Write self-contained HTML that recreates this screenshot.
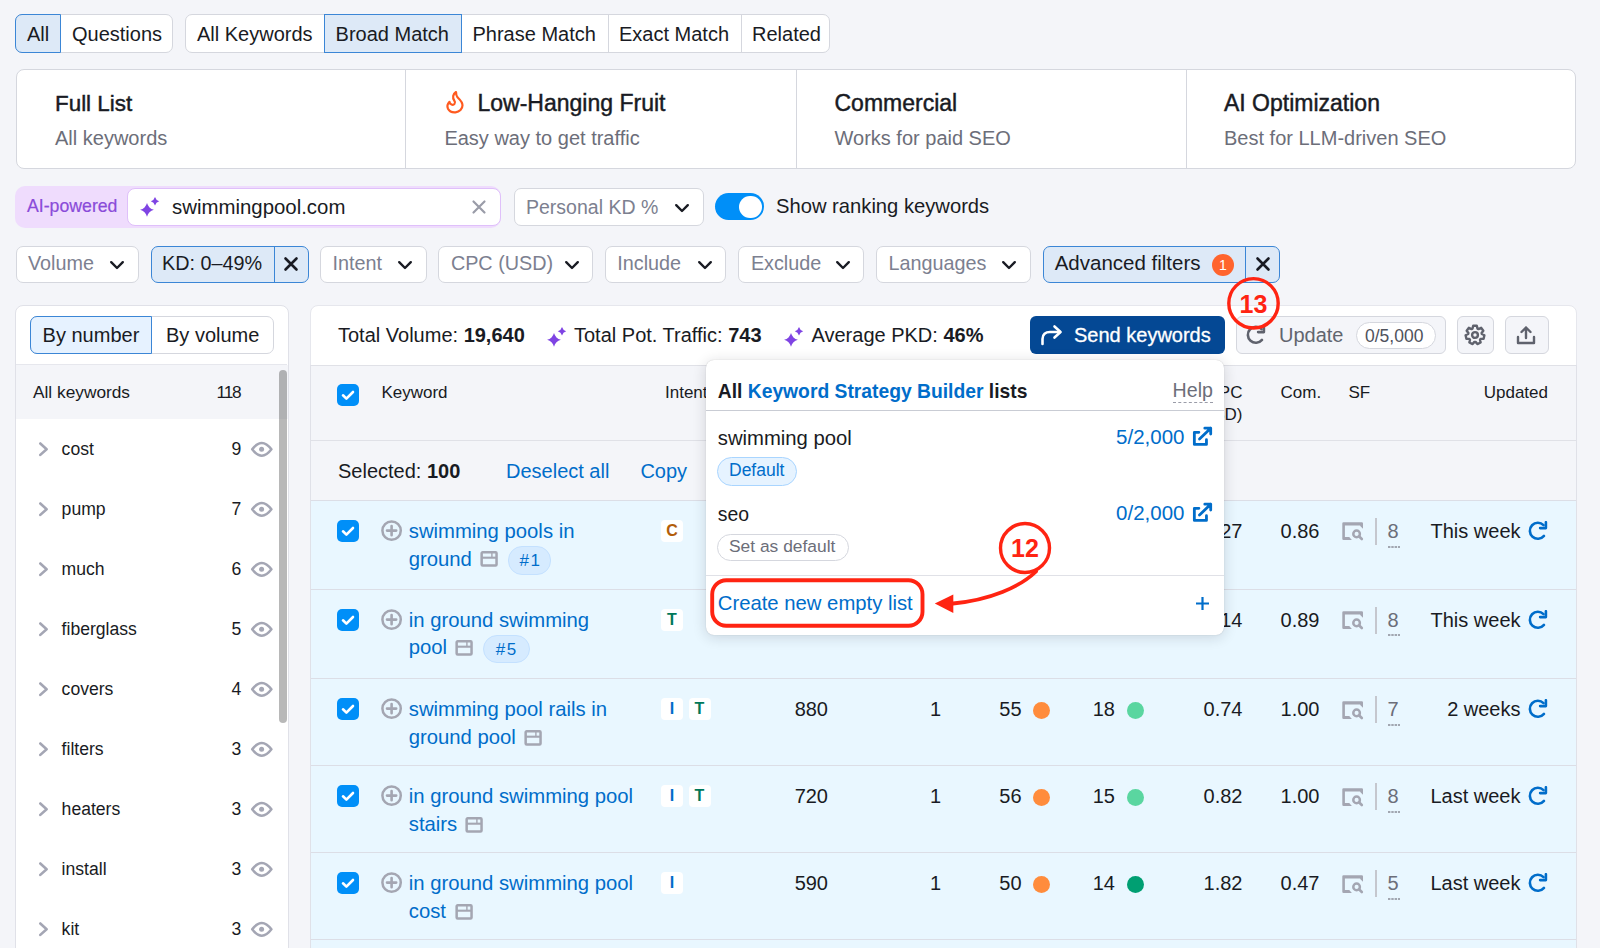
<!DOCTYPE html>
<html><head><meta charset="utf-8">
<style>
*{box-sizing:border-box;margin:0;padding:0}
html,body{width:1600px;height:948px;overflow:hidden;background:#f4f5f9;font-family:"Liberation Sans",sans-serif;color:#191b23}
.abs{position:absolute}
</style></head><body>
<div class="abs" style="left:15.00px;top:14.00px;width:158.00px;height:38.50px;background:#fff;border:1px solid #d5d7de;border-radius:7px;"></div>
<div class="abs" style="left:15.00px;top:14.00px;width:46.00px;height:38.50px;background:#dde9f7;border:1px solid #3b86d6;border-radius:7px 0 0 7px;"></div>
<div class="abs" style="left:27.00px;top:14px;font-size:20.00px;line-height:40px;color:#191b23;font-weight:normal;white-space:nowrap;">All</div>
<div class="abs" style="left:72.00px;top:14px;font-size:20.00px;line-height:40px;color:#191b23;font-weight:normal;white-space:nowrap;">Questions</div>
<div class="abs" style="left:185.00px;top:14.00px;width:645.00px;height:38.50px;background:#fff;border:1px solid #d5d7de;border-radius:7px;"></div>
<div class="abs" style="left:607.50px;top:15.00px;width:1px;height:36.50px;background:#d5d7de"></div>
<div class="abs" style="left:740.50px;top:15.00px;width:1px;height:36.50px;background:#d5d7de"></div>
<div class="abs" style="left:323.60px;top:14.00px;width:138.00px;height:38.50px;background:#dde9f7;border:1px solid #3b86d6;border-radius:0px;"></div>
<div class="abs" style="left:197.00px;top:14px;font-size:20.00px;line-height:40px;color:#191b23;font-weight:normal;white-space:nowrap;">All Keywords</div>
<div class="abs" style="left:335.60px;top:14px;font-size:20.00px;line-height:40px;color:#191b23;font-weight:normal;white-space:nowrap;">Broad Match</div>
<div class="abs" style="left:472.50px;top:14px;font-size:20.00px;line-height:40px;color:#191b23;font-weight:normal;white-space:nowrap;">Phrase Match</div>
<div class="abs" style="left:619.00px;top:14px;font-size:20.00px;line-height:40px;color:#191b23;font-weight:normal;white-space:nowrap;">Exact Match</div>
<div class="abs" style="left:752.00px;top:14px;font-size:20.00px;line-height:40px;color:#191b23;font-weight:normal;white-space:nowrap;">Related</div>
<div class="abs" style="left:15.50px;top:69.00px;width:1560.10px;height:100.00px;background:#fff;border:1px solid #d5d7de;border-radius:8px;"></div>
<div class="abs" style="left:405.40px;top:70.00px;width:1px;height:98.00px;background:#d5d7de"></div>
<div class="abs" style="left:795.50px;top:70.00px;width:1px;height:98.00px;background:#d5d7de"></div>
<div class="abs" style="left:1185.50px;top:70.00px;width:1px;height:98.00px;background:#d5d7de"></div>
<div class="abs" style="left:55.00px;top:84px;font-size:22.40px;line-height:40px;color:#191b23;font-weight:normal;white-space:nowrap;-webkit-text-stroke:0.45px #191b23">Full List</div>
<div class="abs" style="left:55.00px;top:118px;font-size:20.00px;line-height:40px;color:#6c6e79;font-weight:normal;white-space:nowrap;">All keywords</div>
<div class="abs" style="left:477.50px;top:83px;font-size:23.00px;line-height:40px;color:#191b23;font-weight:normal;white-space:nowrap;-webkit-text-stroke:0.45px #191b23">Low-Hanging Fruit</div>
<div class="abs" style="left:444.40px;top:118px;font-size:20.00px;line-height:40px;color:#6c6e79;font-weight:normal;white-space:nowrap;">Easy way to get traffic</div>
<div class="abs" style="left:834.50px;top:83px;font-size:23.00px;line-height:40px;color:#191b23;font-weight:normal;white-space:nowrap;-webkit-text-stroke:0.45px #191b23">Commercial</div>
<div class="abs" style="left:834.50px;top:118px;font-size:20.00px;line-height:40px;color:#6c6e79;font-weight:normal;white-space:nowrap;">Works for paid SEO</div>
<div class="abs" style="left:1224.00px;top:83px;font-size:23.00px;line-height:40px;color:#191b23;font-weight:normal;white-space:nowrap;-webkit-text-stroke:0.45px #191b23">AI Optimization</div>
<div class="abs" style="left:1224.00px;top:118px;font-size:20.00px;line-height:40px;color:#6c6e79;font-weight:normal;white-space:nowrap;">Best for LLM-driven SEO</div>
<svg class="abs" style="left:445px;top:90px" width="20" height="24" viewBox="0 0 20 24"><path d="M11 2 C8 4 7 7.5 9.5 11 C11 13 9 15.6 6.5 14.6 C5 14 4.5 12.8 4.5 11.8 C2.5 13.8 2 16.5 3 18.8 C4.5 21.8 8 22.6 10.5 22.4 C14.5 22 17.5 19 17.5 15.3 C17.5 11.8 14.5 9.3 12.5 7.3 C11.5 6 11 4 11 2 Z" fill="none" stroke="#ff5a1f" stroke-width="2.2" stroke-linejoin="round"/></svg>
<div class="abs" style="left:15px;top:185.5px;width:486px;height:42.5px;background:#efdcfd;border-radius:10px"></div>
<div class="abs" style="left:27.00px;top:186px;font-size:17.70px;line-height:40px;color:#8a4bd9;font-weight:normal;white-space:nowrap;-webkit-text-stroke:0.2px #8a4bd9">AI-powered</div>
<div class="abs" style="left:126.50px;top:187.80px;width:374.00px;height:38.00px;background:#fff;border:1px solid #dfc0fa;border-radius:8px;border-width:1.5px"></div>
<svg class="abs" style="left:139.0px;top:196.0px" width="22" height="22" viewBox="0 0 22 22"><path d="M8.00 6.90 Q9.52 12.28 14.90 13.80 Q9.52 15.32 8.00 20.70 Q6.48 15.32 1.10 13.80 Q6.48 12.28 8.00 6.90 Z M16.00 1.10 Q16.92 4.38 20.20 5.30 Q16.92 6.22 16.00 9.50 Q15.08 6.22 11.80 5.30 Q15.08 4.38 16.00 1.10 Z" fill="#7f44e3"/></svg>
<div class="abs" style="left:172.00px;top:187px;font-size:20.40px;line-height:40px;color:#191b23;font-weight:normal;white-space:nowrap;">swimmingpool.com</div>
<svg class="abs" style="left:470.5px;top:198.5px" width="16" height="16" viewBox="0 0 16 16"><path d="M2.5 2.5 L13.5 13.5 M13.5 2.5 L2.5 13.5" stroke="#9a9ca8" stroke-width="2.2" stroke-linecap="round"/></svg>
<div class="abs" style="left:513.60px;top:187.60px;width:190.60px;height:38.10px;background:#fff;border:1px solid #d5d7de;border-radius:7px;"></div>
<div class="abs" style="left:526.00px;top:187px;font-size:19.50px;line-height:40px;color:#7c8090;font-weight:normal;white-space:nowrap;">Personal KD %</div>
<svg class="abs" style="left:673.5px;top:202.5px" width="16" height="11" viewBox="0 0 16 11"><path d="M2.2 2.2 L8 8 L13.8 2.2" fill="none" stroke="#191b23" stroke-width="2.4" stroke-linecap="round" stroke-linejoin="round"/></svg>
<div class="abs" style="left:715px;top:193px;width:49.4px;height:27px;border-radius:14px;background:#008ff8"></div>
<div class="abs" style="left:739.4px;top:195.8px;width:22.5px;height:22.5px;border-radius:12px;background:#fff"></div>
<div class="abs" style="left:776.00px;top:186px;font-size:20.20px;line-height:40px;color:#191b23;font-weight:normal;white-space:nowrap;">Show ranking keywords</div>
<div class="abs" style="left:15.50px;top:245.50px;width:123.00px;height:37.00px;background:#fff;border:1px solid #d5d7de;border-radius:7px;"></div>
<div class="abs" style="left:28.00px;top:243px;font-size:19.80px;line-height:40px;color:#7c8090;font-weight:normal;white-space:nowrap;">Volume</div>
<svg class="abs" style="left:109.0px;top:259.5px" width="16" height="11" viewBox="0 0 16 11"><path d="M2.2 2.2 L8 8 L13.8 2.2" fill="none" stroke="#191b23" stroke-width="2.4" stroke-linecap="round" stroke-linejoin="round"/></svg>
<div class="abs" style="left:320.00px;top:245.50px;width:106.80px;height:37.00px;background:#fff;border:1px solid #d5d7de;border-radius:7px;"></div>
<div class="abs" style="left:332.50px;top:243px;font-size:19.80px;line-height:40px;color:#7c8090;font-weight:normal;white-space:nowrap;">Intent</div>
<svg class="abs" style="left:397.3px;top:259.5px" width="16" height="11" viewBox="0 0 16 11"><path d="M2.2 2.2 L8 8 L13.8 2.2" fill="none" stroke="#191b23" stroke-width="2.4" stroke-linecap="round" stroke-linejoin="round"/></svg>
<div class="abs" style="left:438.40px;top:245.50px;width:154.60px;height:37.00px;background:#fff;border:1px solid #d5d7de;border-radius:7px;"></div>
<div class="abs" style="left:450.90px;top:243px;font-size:19.80px;line-height:40px;color:#7c8090;font-weight:normal;white-space:nowrap;">CPC (USD)</div>
<svg class="abs" style="left:563.5px;top:259.5px" width="16" height="11" viewBox="0 0 16 11"><path d="M2.2 2.2 L8 8 L13.8 2.2" fill="none" stroke="#191b23" stroke-width="2.4" stroke-linecap="round" stroke-linejoin="round"/></svg>
<div class="abs" style="left:604.80px;top:245.50px;width:121.20px;height:37.00px;background:#fff;border:1px solid #d5d7de;border-radius:7px;"></div>
<div class="abs" style="left:617.30px;top:243px;font-size:19.80px;line-height:40px;color:#7c8090;font-weight:normal;white-space:nowrap;">Include</div>
<svg class="abs" style="left:696.5px;top:259.5px" width="16" height="11" viewBox="0 0 16 11"><path d="M2.2 2.2 L8 8 L13.8 2.2" fill="none" stroke="#191b23" stroke-width="2.4" stroke-linecap="round" stroke-linejoin="round"/></svg>
<div class="abs" style="left:738.40px;top:245.50px;width:126.00px;height:37.00px;background:#fff;border:1px solid #d5d7de;border-radius:7px;"></div>
<div class="abs" style="left:750.90px;top:243px;font-size:19.80px;line-height:40px;color:#7c8090;font-weight:normal;white-space:nowrap;">Exclude</div>
<svg class="abs" style="left:834.9px;top:259.5px" width="16" height="11" viewBox="0 0 16 11"><path d="M2.2 2.2 L8 8 L13.8 2.2" fill="none" stroke="#191b23" stroke-width="2.4" stroke-linecap="round" stroke-linejoin="round"/></svg>
<div class="abs" style="left:876.00px;top:245.50px;width:154.50px;height:37.00px;background:#fff;border:1px solid #d5d7de;border-radius:7px;"></div>
<div class="abs" style="left:888.50px;top:243px;font-size:19.80px;line-height:40px;color:#7c8090;font-weight:normal;white-space:nowrap;">Languages</div>
<svg class="abs" style="left:1001.0px;top:259.5px" width="16" height="11" viewBox="0 0 16 11"><path d="M2.2 2.2 L8 8 L13.8 2.2" fill="none" stroke="#191b23" stroke-width="2.4" stroke-linecap="round" stroke-linejoin="round"/></svg>
<div class="abs" style="left:150.50px;top:245.50px;width:158.00px;height:37.00px;background:#dde9f7;border:1px solid #3b86d6;border-radius:7px;"></div>
<div class="abs" style="left:273.50px;top:246.50px;width:1px;height:35.00px;background:#3b86d6"></div>
<div class="abs" style="left:162.00px;top:243px;font-size:19.80px;line-height:40px;color:#191b23;font-weight:normal;white-space:nowrap;">KD: 0–49%</div>
<svg class="abs" style="left:283.0px;top:256.0px" width="16" height="16" viewBox="0 0 16 16"><path d="M2.5 2.5 L13.5 13.5 M13.5 2.5 L2.5 13.5" stroke="#191b23" stroke-width="2.6" stroke-linecap="round"/></svg>
<div class="abs" style="left:1042.60px;top:245.50px;width:237.40px;height:37.00px;background:#dde9f7;border:1px solid #3b86d6;border-radius:7px;"></div>
<div class="abs" style="left:1245.20px;top:246.50px;width:1px;height:35.00px;background:#3b86d6"></div>
<div class="abs" style="left:1054.70px;top:243px;font-size:20.50px;line-height:40px;color:#191b23;font-weight:normal;white-space:nowrap;">Advanced filters</div>
<div class="abs" style="left:1212px;top:253.5px;width:22px;height:22px;border-radius:11px;background:#ff642d"></div>
<div class="abs" style="left:1212.00px;top:245px;font-size:14.00px;line-height:40px;color:#fff;font-weight:normal;white-space:nowrap;width:22px;text-align:center">1</div>
<svg class="abs" style="left:1254.5px;top:256.0px" width="16" height="16" viewBox="0 0 16 16"><path d="M2.5 2.5 L13.5 13.5 M13.5 2.5 L2.5 13.5" stroke="#191b23" stroke-width="2.6" stroke-linecap="round"/></svg>
<div class="abs" style="left:15px;top:304.6px;width:274px;height:700px;background:#fff;border-radius:8px;border:1px solid #e0e1e8"></div>
<div class="abs" style="left:29.6px;top:315.6px;width:244px;height:38.6px;border:1px solid #d5d7de;border-radius:7px;background:#fff"></div>
<div class="abs" style="left:29.6px;top:315.6px;width:122.4px;height:38.6px;background:#e6f2ff;border:1px solid #3b86d6;border-radius:7px 0 0 7px"></div>
<div class="abs" style="left:42.60px;top:315px;font-size:20.00px;line-height:40px;color:#191b23;font-weight:normal;white-space:nowrap;">By number</div>
<div class="abs" style="left:166.00px;top:315px;font-size:20.00px;line-height:40px;color:#191b23;font-weight:normal;white-space:nowrap;">By volume</div>
<div class="abs" style="left:16px;top:364px;width:271px;height:1px;background:#e6e7ed"></div>
<div class="abs" style="left:16px;top:365px;width:272px;height:54px;background:#f4f5f9"></div>
<div class="abs" style="left:33.00px;top:372px;font-size:17.30px;line-height:40px;color:#191b23;font-weight:normal;white-space:nowrap;">All keywords</div>
<div class="abs" style="left:216.50px;top:372px;font-size:17.30px;line-height:40px;color:#191b23;font-weight:normal;white-space:nowrap;letter-spacing:-1.2px">118</div>
<div class="abs" style="left:279px;top:370px;width:8px;height:353px;border-radius:4px;background:rgba(0,0,0,0.28)"></div>
<svg class="abs" style="left:37px;top:442px" width="12" height="15" viewBox="0 0 12 15"><path d="M3.3 1.5 L9.6 7.2 L3.3 12.9" fill="none" stroke="#a4a6b4" stroke-width="2.6" stroke-linecap="round" stroke-linejoin="round"/></svg>
<div class="abs" style="left:61.60px;top:429px;font-size:17.60px;line-height:40px;color:#191b23;font-weight:normal;white-space:nowrap;">cost</div>
<div class="abs" style="left:-158.60px;top:429px;width:400px;text-align:right;font-size:17.60px;line-height:40px;color:#191b23;font-weight:normal;white-space:nowrap;">9</div>
<svg class="abs" style="left:250px;top:440px" width="24" height="19" viewBox="0 0 24 19"><path d="M2.2 9.3 Q11.8 -3.5 21.4 9.3 Q11.8 22.1 2.2 9.3 Z" fill="none" stroke="#a4a6b4" stroke-width="2.5" stroke-linejoin="round"/><circle cx="11.6" cy="9.3" r="2.5" fill="#a4a6b4"/></svg>
<svg class="abs" style="left:37px;top:502px" width="12" height="15" viewBox="0 0 12 15"><path d="M3.3 1.5 L9.6 7.2 L3.3 12.9" fill="none" stroke="#a4a6b4" stroke-width="2.6" stroke-linecap="round" stroke-linejoin="round"/></svg>
<div class="abs" style="left:61.60px;top:489px;font-size:17.60px;line-height:40px;color:#191b23;font-weight:normal;white-space:nowrap;">pump</div>
<div class="abs" style="left:-158.60px;top:489px;width:400px;text-align:right;font-size:17.60px;line-height:40px;color:#191b23;font-weight:normal;white-space:nowrap;">7</div>
<svg class="abs" style="left:250px;top:500px" width="24" height="19" viewBox="0 0 24 19"><path d="M2.2 9.3 Q11.8 -3.5 21.4 9.3 Q11.8 22.1 2.2 9.3 Z" fill="none" stroke="#a4a6b4" stroke-width="2.5" stroke-linejoin="round"/><circle cx="11.6" cy="9.3" r="2.5" fill="#a4a6b4"/></svg>
<svg class="abs" style="left:37px;top:562px" width="12" height="15" viewBox="0 0 12 15"><path d="M3.3 1.5 L9.6 7.2 L3.3 12.9" fill="none" stroke="#a4a6b4" stroke-width="2.6" stroke-linecap="round" stroke-linejoin="round"/></svg>
<div class="abs" style="left:61.60px;top:549px;font-size:17.60px;line-height:40px;color:#191b23;font-weight:normal;white-space:nowrap;">much</div>
<div class="abs" style="left:-158.60px;top:549px;width:400px;text-align:right;font-size:17.60px;line-height:40px;color:#191b23;font-weight:normal;white-space:nowrap;">6</div>
<svg class="abs" style="left:250px;top:560px" width="24" height="19" viewBox="0 0 24 19"><path d="M2.2 9.3 Q11.8 -3.5 21.4 9.3 Q11.8 22.1 2.2 9.3 Z" fill="none" stroke="#a4a6b4" stroke-width="2.5" stroke-linejoin="round"/><circle cx="11.6" cy="9.3" r="2.5" fill="#a4a6b4"/></svg>
<svg class="abs" style="left:37px;top:622px" width="12" height="15" viewBox="0 0 12 15"><path d="M3.3 1.5 L9.6 7.2 L3.3 12.9" fill="none" stroke="#a4a6b4" stroke-width="2.6" stroke-linecap="round" stroke-linejoin="round"/></svg>
<div class="abs" style="left:61.60px;top:609px;font-size:17.60px;line-height:40px;color:#191b23;font-weight:normal;white-space:nowrap;">fiberglass</div>
<div class="abs" style="left:-158.60px;top:609px;width:400px;text-align:right;font-size:17.60px;line-height:40px;color:#191b23;font-weight:normal;white-space:nowrap;">5</div>
<svg class="abs" style="left:250px;top:620px" width="24" height="19" viewBox="0 0 24 19"><path d="M2.2 9.3 Q11.8 -3.5 21.4 9.3 Q11.8 22.1 2.2 9.3 Z" fill="none" stroke="#a4a6b4" stroke-width="2.5" stroke-linejoin="round"/><circle cx="11.6" cy="9.3" r="2.5" fill="#a4a6b4"/></svg>
<svg class="abs" style="left:37px;top:682px" width="12" height="15" viewBox="0 0 12 15"><path d="M3.3 1.5 L9.6 7.2 L3.3 12.9" fill="none" stroke="#a4a6b4" stroke-width="2.6" stroke-linecap="round" stroke-linejoin="round"/></svg>
<div class="abs" style="left:61.60px;top:669px;font-size:17.60px;line-height:40px;color:#191b23;font-weight:normal;white-space:nowrap;">covers</div>
<div class="abs" style="left:-158.60px;top:669px;width:400px;text-align:right;font-size:17.60px;line-height:40px;color:#191b23;font-weight:normal;white-space:nowrap;">4</div>
<svg class="abs" style="left:250px;top:680px" width="24" height="19" viewBox="0 0 24 19"><path d="M2.2 9.3 Q11.8 -3.5 21.4 9.3 Q11.8 22.1 2.2 9.3 Z" fill="none" stroke="#a4a6b4" stroke-width="2.5" stroke-linejoin="round"/><circle cx="11.6" cy="9.3" r="2.5" fill="#a4a6b4"/></svg>
<svg class="abs" style="left:37px;top:742px" width="12" height="15" viewBox="0 0 12 15"><path d="M3.3 1.5 L9.6 7.2 L3.3 12.9" fill="none" stroke="#a4a6b4" stroke-width="2.6" stroke-linecap="round" stroke-linejoin="round"/></svg>
<div class="abs" style="left:61.60px;top:729px;font-size:17.60px;line-height:40px;color:#191b23;font-weight:normal;white-space:nowrap;">filters</div>
<div class="abs" style="left:-158.60px;top:729px;width:400px;text-align:right;font-size:17.60px;line-height:40px;color:#191b23;font-weight:normal;white-space:nowrap;">3</div>
<svg class="abs" style="left:250px;top:740px" width="24" height="19" viewBox="0 0 24 19"><path d="M2.2 9.3 Q11.8 -3.5 21.4 9.3 Q11.8 22.1 2.2 9.3 Z" fill="none" stroke="#a4a6b4" stroke-width="2.5" stroke-linejoin="round"/><circle cx="11.6" cy="9.3" r="2.5" fill="#a4a6b4"/></svg>
<svg class="abs" style="left:37px;top:802px" width="12" height="15" viewBox="0 0 12 15"><path d="M3.3 1.5 L9.6 7.2 L3.3 12.9" fill="none" stroke="#a4a6b4" stroke-width="2.6" stroke-linecap="round" stroke-linejoin="round"/></svg>
<div class="abs" style="left:61.60px;top:789px;font-size:17.60px;line-height:40px;color:#191b23;font-weight:normal;white-space:nowrap;">heaters</div>
<div class="abs" style="left:-158.60px;top:789px;width:400px;text-align:right;font-size:17.60px;line-height:40px;color:#191b23;font-weight:normal;white-space:nowrap;">3</div>
<svg class="abs" style="left:250px;top:800px" width="24" height="19" viewBox="0 0 24 19"><path d="M2.2 9.3 Q11.8 -3.5 21.4 9.3 Q11.8 22.1 2.2 9.3 Z" fill="none" stroke="#a4a6b4" stroke-width="2.5" stroke-linejoin="round"/><circle cx="11.6" cy="9.3" r="2.5" fill="#a4a6b4"/></svg>
<svg class="abs" style="left:37px;top:862px" width="12" height="15" viewBox="0 0 12 15"><path d="M3.3 1.5 L9.6 7.2 L3.3 12.9" fill="none" stroke="#a4a6b4" stroke-width="2.6" stroke-linecap="round" stroke-linejoin="round"/></svg>
<div class="abs" style="left:61.60px;top:849px;font-size:17.60px;line-height:40px;color:#191b23;font-weight:normal;white-space:nowrap;">install</div>
<div class="abs" style="left:-158.60px;top:849px;width:400px;text-align:right;font-size:17.60px;line-height:40px;color:#191b23;font-weight:normal;white-space:nowrap;">3</div>
<svg class="abs" style="left:250px;top:860px" width="24" height="19" viewBox="0 0 24 19"><path d="M2.2 9.3 Q11.8 -3.5 21.4 9.3 Q11.8 22.1 2.2 9.3 Z" fill="none" stroke="#a4a6b4" stroke-width="2.5" stroke-linejoin="round"/><circle cx="11.6" cy="9.3" r="2.5" fill="#a4a6b4"/></svg>
<svg class="abs" style="left:37px;top:922px" width="12" height="15" viewBox="0 0 12 15"><path d="M3.3 1.5 L9.6 7.2 L3.3 12.9" fill="none" stroke="#a4a6b4" stroke-width="2.6" stroke-linecap="round" stroke-linejoin="round"/></svg>
<div class="abs" style="left:61.60px;top:909px;font-size:17.60px;line-height:40px;color:#191b23;font-weight:normal;white-space:nowrap;">kit</div>
<div class="abs" style="left:-158.60px;top:909px;width:400px;text-align:right;font-size:17.60px;line-height:40px;color:#191b23;font-weight:normal;white-space:nowrap;">3</div>
<svg class="abs" style="left:250px;top:920px" width="24" height="19" viewBox="0 0 24 19"><path d="M2.2 9.3 Q11.8 -3.5 21.4 9.3 Q11.8 22.1 2.2 9.3 Z" fill="none" stroke="#a4a6b4" stroke-width="2.5" stroke-linejoin="round"/><circle cx="11.6" cy="9.3" r="2.5" fill="#a4a6b4"/></svg>
<div class="abs" style="left:309.5px;top:304.7px;width:1267.2px;height:700px;background:#fff;border-radius:8px;border:1px solid #e6e7ed;overflow:hidden">
<div class="abs" style="left:-1px;top:59px;width:1266px;height:76px;background:#f4f5f9;border-top:1px solid #e0e1e7;border-bottom:1px solid #e0e1e7"></div>
<div class="abs" style="left:-1px;top:135px;width:1266px;height:60px;background:#f4f5f9;border-bottom:1px solid #dfe1e8"></div>
</div>
<div class="abs" style="left:338.00px;top:315px;font-size:20.00px;line-height:40px;color:#191b23;font-weight:normal;white-space:nowrap;">Total Volume: <b>19,640</b></div>
<svg class="abs" style="left:545.6px;top:325.6px" width="22" height="22" viewBox="0 0 22 22"><path d="M8.00 6.90 Q9.52 12.28 14.90 13.80 Q9.52 15.32 8.00 20.70 Q6.48 15.32 1.10 13.80 Q6.48 12.28 8.00 6.90 Z M16.00 1.10 Q16.92 4.38 20.20 5.30 Q16.92 6.22 16.00 9.50 Q15.08 6.22 11.80 5.30 Q15.08 4.38 16.00 1.10 Z" fill="#7f44e3"/></svg>
<div class="abs" style="left:574.00px;top:315px;font-size:20.00px;line-height:40px;color:#191b23;font-weight:normal;white-space:nowrap;">Total Pot. Traffic: <b>743</b></div>
<svg class="abs" style="left:783.3px;top:325.6px" width="22" height="22" viewBox="0 0 22 22"><path d="M8.00 6.90 Q9.52 12.28 14.90 13.80 Q9.52 15.32 8.00 20.70 Q6.48 15.32 1.10 13.80 Q6.48 12.28 8.00 6.90 Z M16.00 1.10 Q16.92 4.38 20.20 5.30 Q16.92 6.22 16.00 9.50 Q15.08 6.22 11.80 5.30 Q15.08 4.38 16.00 1.10 Z" fill="#7f44e3"/></svg>
<div class="abs" style="left:811.50px;top:315px;font-size:20.00px;line-height:40px;color:#191b23;font-weight:normal;white-space:nowrap;">Average PKD: <b>46%</b></div>
<div class="abs" style="left:1030px;top:316px;width:195px;height:38px;border-radius:6px;background:#044894"></div>
<svg class="abs" style="left:1040px;top:324px" width="24" height="22" viewBox="0 0 24 22"><path d="M2.5 20 V15 C2.5 10.5 5.5 8 10 8 H20" fill="none" stroke="#fff" stroke-width="2.6" stroke-linecap="round"/><path d="M14.5 2.5 L20.5 8 L14.5 13.5" fill="none" stroke="#fff" stroke-width="2.6" stroke-linecap="round" stroke-linejoin="round"/></svg>
<div class="abs" style="left:1074.00px;top:315px;font-size:20.00px;line-height:40px;color:#fff;font-weight:normal;white-space:nowrap;-webkit-text-stroke:0.3px #fff">Send keywords</div>
<div class="abs" style="left:1236px;top:316px;width:210px;height:38px;border-radius:6px;background:#f4f5f9;border:1px solid #d5d7de"></div>
<svg class="abs" style="left:1246.2px;top:325.4px" width="20" height="20" viewBox="0 0 20 20"><path d="M16 14.9 A8 8 0 1 1 15.56 4.14" fill="none" stroke="#5f626d" stroke-width="2.6" stroke-linecap="round"/><path d="M17.9 1.2 V7.1 H12.1" fill="none" stroke="#5f626d" stroke-width="2.6" stroke-linecap="round" stroke-linejoin="round"/></svg>
<div class="abs" style="left:1279.00px;top:315px;font-size:20.00px;line-height:40px;color:#62656f;font-weight:normal;white-space:nowrap;">Update</div>
<div class="abs" style="left:1356px;top:322px;width:80px;height:27px;border-radius:14px;background:#fff;border:1px solid #d5d7de"></div>
<div class="abs" style="left:1365.00px;top:316px;font-size:17.50px;line-height:40px;color:#4f525c;font-weight:normal;white-space:nowrap;">0/5,000</div>
<div class="abs" style="left:1457px;top:316px;width:37px;height:38px;border-radius:6px;background:#f4f5f9;border:1px solid #d5d7de"></div>
<svg class="abs" style="left:1464.2px;top:323.7px" width="22" height="22" viewBox="0 0 22 22"><path d="M8.53 4.56 L9.21 1.77 L12.79 1.77 L13.47 4.56 L14.49 5.05 L17.10 3.84 L19.33 6.65 L17.58 8.92 L17.83 10.02 L20.40 11.30 L19.60 14.80 L16.73 14.84 L16.02 15.73 L16.62 18.54 L13.39 20.09 L11.57 17.88 L10.43 17.88 L8.61 20.09 L5.38 18.54 L5.98 15.73 L5.27 14.84 L2.40 14.80 L1.60 11.30 L4.17 10.02 L4.42 8.92 L2.67 6.65 L4.90 3.84 L7.51 5.05 Z" fill="none" stroke="#5f626d" stroke-width="2.4" stroke-linejoin="round"/><circle cx="11" cy="11" r="2.9" fill="none" stroke="#5f626d" stroke-width="2.4"/></svg>
<div class="abs" style="left:1505px;top:316px;width:43.5px;height:38px;border-radius:6px;background:#f4f5f9;border:1px solid #d5d7de"></div>
<svg class="abs" style="left:1516px;top:325px" width="20" height="20" viewBox="0 0 20 20"><path d="M10 13 V2.5 M5.5 7 L10 2.5 L14.5 7" fill="none" stroke="#5f626d" stroke-width="2.4" stroke-linecap="round" stroke-linejoin="round"/><path d="M2 12 V18 H18 V12" fill="none" stroke="#5f626d" stroke-width="2.4" stroke-linecap="round" stroke-linejoin="round"/></svg>
<div class="abs" style="left:337.0px;top:384.0px;width:22px;height:22px;border-radius:5px;background:#008ff8"><svg width="22" height="22" viewBox="0 0 22 22" style="display:block"><path d="M6 11.3 L9.4 14.6 L16 8" fill="none" stroke="#fff" stroke-width="2.6" stroke-linecap="round" stroke-linejoin="round"/></svg></div>
<div class="abs" style="left:381.40px;top:373px;font-size:17.00px;line-height:40px;color:#191b23;font-weight:normal;white-space:nowrap;">Keyword</div>
<div class="abs" style="left:665.00px;top:373px;font-size:17.00px;line-height:40px;color:#191b23;font-weight:normal;white-space:nowrap;">Intent</div>
<div class="abs" style="left:428.00px;top:373px;width:400px;text-align:right;font-size:17.00px;line-height:40px;color:#191b23;font-weight:normal;white-space:nowrap;">Volume</div>
<div class="abs" style="left:842.50px;top:373px;width:400px;text-align:right;font-size:17.00px;line-height:40px;color:#191b23;font-weight:normal;white-space:nowrap;">CPC</div>
<div class="abs" style="left:842.50px;top:395px;width:400px;text-align:right;font-size:17.00px;line-height:40px;color:#191b23;font-weight:normal;white-space:nowrap;">(USD)</div>
<div class="abs" style="left:1280.50px;top:373px;font-size:17.00px;line-height:40px;color:#191b23;font-weight:normal;white-space:nowrap;">Com.</div>
<div class="abs" style="left:1348.50px;top:373px;font-size:17.00px;line-height:40px;color:#191b23;font-weight:normal;white-space:nowrap;">SF</div>
<div class="abs" style="left:1148.00px;top:373px;width:400px;text-align:right;font-size:17.00px;line-height:40px;color:#191b23;font-weight:normal;white-space:nowrap;">Updated</div>
<div class="abs" style="left:338.00px;top:451px;font-size:20.00px;line-height:40px;color:#191b23;font-weight:normal;white-space:nowrap;">Selected: <b>100</b></div>
<div class="abs" style="left:506.00px;top:451px;font-size:20.00px;line-height:40px;color:#006dca;font-weight:normal;white-space:nowrap;">Deselect all</div>
<div class="abs" style="left:640.40px;top:451px;font-size:20.00px;line-height:40px;color:#006dca;font-weight:normal;white-space:nowrap;">Copy</div>
<div class="abs" style="left:310px;top:500.00px;width:1266px;height:89.75px;background:#e9f7ff;border-top:1px solid #dcdee6"></div>
<div class="abs" style="left:310px;top:588.75px;width:1266px;height:90.50px;background:#e9f7ff;border-top:1px solid #dcdee6"></div>
<div class="abs" style="left:310px;top:678.25px;width:1266px;height:88.00px;background:#e9f7ff;border-top:1px solid #dcdee6"></div>
<div class="abs" style="left:310px;top:765.25px;width:1266px;height:88.00px;background:#e9f7ff;border-top:1px solid #dcdee6"></div>
<div class="abs" style="left:310px;top:852.25px;width:1266px;height:88.00px;background:#e9f7ff;border-top:1px solid #dcdee6"></div>
<div class="abs" style="left:310px;top:939.25px;width:1266px;height:20px;background:#e9f7ff;border-top:1px solid #dcdee6"></div>
<div class="abs" style="left:309.5px;top:365px;width:1px;height:600px;background:#e0e1e8"></div>
<div class="abs" style="left:1575.8px;top:365px;width:1px;height:600px;background:#e0e1e8"></div>
<div class="abs" style="left:337.0px;top:520.0px;width:22px;height:22px;border-radius:5px;background:#008ff8"><svg width="22" height="22" viewBox="0 0 22 22" style="display:block"><path d="M6 11.3 L9.4 14.6 L16 8" fill="none" stroke="#fff" stroke-width="2.6" stroke-linecap="round" stroke-linejoin="round"/></svg></div>
<svg class="abs" style="left:381.0px;top:520.0px" width="22" height="22" viewBox="0 0 22 22"><circle cx="10.6" cy="10.6" r="9.2" fill="none" stroke="#a4a6b2" stroke-width="2.5"/><path d="M10.6 6 V15.2 M6 10.6 H15.2" stroke="#a4a6b2" stroke-width="2.6" stroke-linecap="round"/></svg>
<div class="abs" style="left:408.75px;top:511px;font-size:20.30px;line-height:40px;color:#006dca;font-weight:normal;white-space:nowrap;">swimming pools in</div>
<div class="abs" style="left:408.75px;top:539px;font-size:20.30px;line-height:40px;color:#006dca;font-weight:normal;white-space:nowrap;">ground</div>
<svg class="abs" style="left:480.3px;top:551.2px" width="18" height="16" viewBox="0 0 18 16"><rect x="1.65" y="1.35" width="14.9" height="13.2" rx="1" fill="none" stroke="#a4a6b2" stroke-width="2.5"/><path d="M1.5 6.7 H16.8" stroke="#a4a6b2" stroke-width="2.1"/><path d="M11.9 1.2 V6.5" stroke="#a4a6b2" stroke-width="1.4"/></svg>
<div class="abs" style="left:508.3px;top:546.1px;width:43px;height:28.5px;border-radius:14px;background:#d6ebff;border:1px solid #c4e1ff"></div>
<div class="abs" style="left:508.30px;top:541px;font-size:17.00px;line-height:40px;color:#006dca;font-weight:normal;white-space:nowrap;letter-spacing:1.5px;width:43px;text-align:center;text-indent:1.5px">#1</div>
<div class="abs" style="left:661.0px;top:520.0px;width:22px;height:22px;border-radius:4px;background:#fff;color:#b25d0a;font-weight:bold;font-size:16px;line-height:22px;text-align:center">C</div>
<div class="abs" style="left:428.00px;top:511px;width:400px;text-align:right;font-size:20.00px;line-height:40px;color:#191b23;font-weight:normal;white-space:nowrap;">1,900</div>
<div class="abs" style="left:541.00px;top:511px;width:400px;text-align:right;font-size:20.00px;line-height:40px;color:#191b23;font-weight:normal;white-space:nowrap;">1</div>
<div class="abs" style="left:621.60px;top:511px;width:400px;text-align:right;font-size:20.00px;line-height:40px;color:#191b23;font-weight:normal;white-space:nowrap;">45</div>
<div class="abs" style="left:1033.3px;top:523.3px;width:17px;height:17px;border-radius:9px;background:#ff8c3c"></div>
<div class="abs" style="left:715.00px;top:511px;width:400px;text-align:right;font-size:20.00px;line-height:40px;color:#191b23;font-weight:normal;white-space:nowrap;">20</div>
<div class="abs" style="left:1126.5px;top:523.3px;width:17px;height:17px;border-radius:9px;background:#5ad6a0"></div>
<div class="abs" style="left:842.50px;top:511px;width:400px;text-align:right;font-size:20.00px;line-height:40px;color:#191b23;font-weight:normal;white-space:nowrap;">1.27</div>
<div class="abs" style="left:919.50px;top:511px;width:400px;text-align:right;font-size:20.00px;line-height:40px;color:#191b23;font-weight:normal;white-space:nowrap;">0.86</div>
<svg class="abs" style="left:1342.0px;top:522.2px" width="22" height="19" viewBox="0 0 22 19"><path d="M0.3 1.5 Q0.3 0.2 1.5 0.2 H19.8 Q21 0.2 21 1.5 V6.8 L18.2 4 V3.6 H2.9 V15 H7.2 L9.9 17.9 H1.5 Q0.3 17.9 0.3 16.7 Z" fill="#a4a6b2"/><circle cx="14.6" cy="11.9" r="3.3" fill="none" stroke="#a4a6b2" stroke-width="2.5"/><path d="M17 14.3 L19.8 17" stroke="#a4a6b2" stroke-width="2.6" stroke-linecap="round"/></svg>
<div class="abs" style="left:1375px;top:518.0px;width:1.6px;height:27px;background:#c5c7ce"></div>
<div class="abs" style="left:1387.50px;top:511px;font-size:20.00px;line-height:40px;color:#6c6e79;font-weight:normal;white-space:nowrap;">8</div>
<svg class="abs" style="left:1387.5px;top:545.6px" width="12" height="2" viewBox="0 0 12 2"><path d="M0 1 H12" stroke="#8a8d98" stroke-width="1.3" stroke-dasharray="2.4 0.9"/></svg>
<div class="abs" style="left:1120.50px;top:511px;width:400px;text-align:right;font-size:20.00px;line-height:40px;color:#191b23;font-weight:normal;white-space:nowrap;">This week</div>
<svg class="abs" style="left:1528.0px;top:521.0px" width="20" height="20" viewBox="0 0 20 20"><path d="M16 14.9 A8 8 0 1 1 15.56 4.14" fill="none" stroke="#006dca" stroke-width="2.6" stroke-linecap="round"/><path d="M17.9 1.2 V7.1 H12.1" fill="none" stroke="#006dca" stroke-width="2.6" stroke-linecap="round" stroke-linejoin="round"/></svg>
<div class="abs" style="left:337.0px;top:608.8px;width:22px;height:22px;border-radius:5px;background:#008ff8"><svg width="22" height="22" viewBox="0 0 22 22" style="display:block"><path d="M6 11.3 L9.4 14.6 L16 8" fill="none" stroke="#fff" stroke-width="2.6" stroke-linecap="round" stroke-linejoin="round"/></svg></div>
<svg class="abs" style="left:381.0px;top:608.8px" width="22" height="22" viewBox="0 0 22 22"><circle cx="10.6" cy="10.6" r="9.2" fill="none" stroke="#a4a6b2" stroke-width="2.5"/><path d="M10.6 6 V15.2 M6 10.6 H15.2" stroke="#a4a6b2" stroke-width="2.6" stroke-linecap="round"/></svg>
<div class="abs" style="left:408.75px;top:600px;font-size:20.30px;line-height:40px;color:#006dca;font-weight:normal;white-space:nowrap;">in ground swimming</div>
<div class="abs" style="left:408.75px;top:627px;font-size:20.30px;line-height:40px;color:#006dca;font-weight:normal;white-space:nowrap;">pool</div>
<svg class="abs" style="left:454.5px;top:640.0px" width="18" height="16" viewBox="0 0 18 16"><rect x="1.65" y="1.35" width="14.9" height="13.2" rx="1" fill="none" stroke="#a4a6b2" stroke-width="2.5"/><path d="M1.5 6.7 H16.8" stroke="#a4a6b2" stroke-width="2.1"/><path d="M11.9 1.2 V6.5" stroke="#a4a6b2" stroke-width="1.4"/></svg>
<div class="abs" style="left:482.5px;top:634.9px;width:47px;height:28.5px;border-radius:14px;background:#d6ebff;border:1px solid #c4e1ff"></div>
<div class="abs" style="left:482.50px;top:630px;font-size:17.00px;line-height:40px;color:#006dca;font-weight:normal;white-space:nowrap;letter-spacing:1.5px;width:47px;text-align:center;text-indent:1.5px">#5</div>
<div class="abs" style="left:661.0px;top:608.8px;width:22px;height:22px;border-radius:4px;background:#fff;color:#00785a;font-weight:bold;font-size:16px;line-height:22px;text-align:center">T</div>
<div class="abs" style="left:428.00px;top:600px;width:400px;text-align:right;font-size:20.00px;line-height:40px;color:#191b23;font-weight:normal;white-space:nowrap;">1,300</div>
<div class="abs" style="left:541.00px;top:600px;width:400px;text-align:right;font-size:20.00px;line-height:40px;color:#191b23;font-weight:normal;white-space:nowrap;">1</div>
<div class="abs" style="left:621.60px;top:600px;width:400px;text-align:right;font-size:20.00px;line-height:40px;color:#191b23;font-weight:normal;white-space:nowrap;">48</div>
<div class="abs" style="left:1033.3px;top:612.1px;width:17px;height:17px;border-radius:9px;background:#ff8c3c"></div>
<div class="abs" style="left:715.00px;top:600px;width:400px;text-align:right;font-size:20.00px;line-height:40px;color:#191b23;font-weight:normal;white-space:nowrap;">19</div>
<div class="abs" style="left:1126.5px;top:612.1px;width:17px;height:17px;border-radius:9px;background:#5ad6a0"></div>
<div class="abs" style="left:842.50px;top:600px;width:400px;text-align:right;font-size:20.00px;line-height:40px;color:#191b23;font-weight:normal;white-space:nowrap;">2.14</div>
<div class="abs" style="left:919.50px;top:600px;width:400px;text-align:right;font-size:20.00px;line-height:40px;color:#191b23;font-weight:normal;white-space:nowrap;">0.89</div>
<svg class="abs" style="left:1342.0px;top:611.0px" width="22" height="19" viewBox="0 0 22 19"><path d="M0.3 1.5 Q0.3 0.2 1.5 0.2 H19.8 Q21 0.2 21 1.5 V6.8 L18.2 4 V3.6 H2.9 V15 H7.2 L9.9 17.9 H1.5 Q0.3 17.9 0.3 16.7 Z" fill="#a4a6b2"/><circle cx="14.6" cy="11.9" r="3.3" fill="none" stroke="#a4a6b2" stroke-width="2.5"/><path d="M17 14.3 L19.8 17" stroke="#a4a6b2" stroke-width="2.6" stroke-linecap="round"/></svg>
<div class="abs" style="left:1375px;top:606.8px;width:1.6px;height:27px;background:#c5c7ce"></div>
<div class="abs" style="left:1387.50px;top:600px;font-size:20.00px;line-height:40px;color:#6c6e79;font-weight:normal;white-space:nowrap;">8</div>
<svg class="abs" style="left:1387.5px;top:634.4px" width="12" height="2" viewBox="0 0 12 2"><path d="M0 1 H12" stroke="#8a8d98" stroke-width="1.3" stroke-dasharray="2.4 0.9"/></svg>
<div class="abs" style="left:1120.50px;top:600px;width:400px;text-align:right;font-size:20.00px;line-height:40px;color:#191b23;font-weight:normal;white-space:nowrap;">This week</div>
<svg class="abs" style="left:1528.0px;top:609.8px" width="20" height="20" viewBox="0 0 20 20"><path d="M16 14.9 A8 8 0 1 1 15.56 4.14" fill="none" stroke="#006dca" stroke-width="2.6" stroke-linecap="round"/><path d="M17.9 1.2 V7.1 H12.1" fill="none" stroke="#006dca" stroke-width="2.6" stroke-linecap="round" stroke-linejoin="round"/></svg>
<div class="abs" style="left:337.0px;top:698.2px;width:22px;height:22px;border-radius:5px;background:#008ff8"><svg width="22" height="22" viewBox="0 0 22 22" style="display:block"><path d="M6 11.3 L9.4 14.6 L16 8" fill="none" stroke="#fff" stroke-width="2.6" stroke-linecap="round" stroke-linejoin="round"/></svg></div>
<svg class="abs" style="left:381.0px;top:698.2px" width="22" height="22" viewBox="0 0 22 22"><circle cx="10.6" cy="10.6" r="9.2" fill="none" stroke="#a4a6b2" stroke-width="2.5"/><path d="M10.6 6 V15.2 M6 10.6 H15.2" stroke="#a4a6b2" stroke-width="2.6" stroke-linecap="round"/></svg>
<div class="abs" style="left:408.75px;top:689px;font-size:20.30px;line-height:40px;color:#006dca;font-weight:normal;white-space:nowrap;">swimming pool rails in</div>
<div class="abs" style="left:408.75px;top:717px;font-size:20.30px;line-height:40px;color:#006dca;font-weight:normal;white-space:nowrap;">ground pool</div>
<svg class="abs" style="left:524.3px;top:729.5px" width="18" height="16" viewBox="0 0 18 16"><rect x="1.65" y="1.35" width="14.9" height="13.2" rx="1" fill="none" stroke="#a4a6b2" stroke-width="2.5"/><path d="M1.5 6.7 H16.8" stroke="#a4a6b2" stroke-width="2.1"/><path d="M11.9 1.2 V6.5" stroke="#a4a6b2" stroke-width="1.4"/></svg>
<div class="abs" style="left:661.0px;top:698.2px;width:22px;height:22px;border-radius:4px;background:#fff;color:#006dca;font-weight:bold;font-size:16px;line-height:22px;text-align:center">I</div>
<div class="abs" style="left:688.5px;top:698.2px;width:22px;height:22px;border-radius:4px;background:#fff;color:#00785a;font-weight:bold;font-size:16px;line-height:22px;text-align:center">T</div>
<div class="abs" style="left:428.00px;top:689px;width:400px;text-align:right;font-size:20.00px;line-height:40px;color:#191b23;font-weight:normal;white-space:nowrap;">880</div>
<div class="abs" style="left:541.00px;top:689px;width:400px;text-align:right;font-size:20.00px;line-height:40px;color:#191b23;font-weight:normal;white-space:nowrap;">1</div>
<div class="abs" style="left:621.60px;top:689px;width:400px;text-align:right;font-size:20.00px;line-height:40px;color:#191b23;font-weight:normal;white-space:nowrap;">55</div>
<div class="abs" style="left:1033.3px;top:701.6px;width:17px;height:17px;border-radius:9px;background:#ff8c3c"></div>
<div class="abs" style="left:715.00px;top:689px;width:400px;text-align:right;font-size:20.00px;line-height:40px;color:#191b23;font-weight:normal;white-space:nowrap;">18</div>
<div class="abs" style="left:1126.5px;top:701.6px;width:17px;height:17px;border-radius:9px;background:#5ad6a0"></div>
<div class="abs" style="left:842.50px;top:689px;width:400px;text-align:right;font-size:20.00px;line-height:40px;color:#191b23;font-weight:normal;white-space:nowrap;">0.74</div>
<div class="abs" style="left:919.50px;top:689px;width:400px;text-align:right;font-size:20.00px;line-height:40px;color:#191b23;font-weight:normal;white-space:nowrap;">1.00</div>
<svg class="abs" style="left:1342.0px;top:700.5px" width="22" height="19" viewBox="0 0 22 19"><path d="M0.3 1.5 Q0.3 0.2 1.5 0.2 H19.8 Q21 0.2 21 1.5 V6.8 L18.2 4 V3.6 H2.9 V15 H7.2 L9.9 17.9 H1.5 Q0.3 17.9 0.3 16.7 Z" fill="#a4a6b2"/><circle cx="14.6" cy="11.9" r="3.3" fill="none" stroke="#a4a6b2" stroke-width="2.5"/><path d="M17 14.3 L19.8 17" stroke="#a4a6b2" stroke-width="2.6" stroke-linecap="round"/></svg>
<div class="abs" style="left:1375px;top:696.2px;width:1.6px;height:27px;background:#c5c7ce"></div>
<div class="abs" style="left:1387.50px;top:689px;font-size:20.00px;line-height:40px;color:#6c6e79;font-weight:normal;white-space:nowrap;">7</div>
<svg class="abs" style="left:1387.5px;top:723.9px" width="12" height="2" viewBox="0 0 12 2"><path d="M0 1 H12" stroke="#8a8d98" stroke-width="1.3" stroke-dasharray="2.4 0.9"/></svg>
<div class="abs" style="left:1120.50px;top:689px;width:400px;text-align:right;font-size:20.00px;line-height:40px;color:#191b23;font-weight:normal;white-space:nowrap;">2 weeks</div>
<svg class="abs" style="left:1528.0px;top:699.2px" width="20" height="20" viewBox="0 0 20 20"><path d="M16 14.9 A8 8 0 1 1 15.56 4.14" fill="none" stroke="#006dca" stroke-width="2.6" stroke-linecap="round"/><path d="M17.9 1.2 V7.1 H12.1" fill="none" stroke="#006dca" stroke-width="2.6" stroke-linecap="round" stroke-linejoin="round"/></svg>
<div class="abs" style="left:337.0px;top:785.2px;width:22px;height:22px;border-radius:5px;background:#008ff8"><svg width="22" height="22" viewBox="0 0 22 22" style="display:block"><path d="M6 11.3 L9.4 14.6 L16 8" fill="none" stroke="#fff" stroke-width="2.6" stroke-linecap="round" stroke-linejoin="round"/></svg></div>
<svg class="abs" style="left:381.0px;top:785.2px" width="22" height="22" viewBox="0 0 22 22"><circle cx="10.6" cy="10.6" r="9.2" fill="none" stroke="#a4a6b2" stroke-width="2.5"/><path d="M10.6 6 V15.2 M6 10.6 H15.2" stroke="#a4a6b2" stroke-width="2.6" stroke-linecap="round"/></svg>
<div class="abs" style="left:408.75px;top:776px;font-size:20.30px;line-height:40px;color:#006dca;font-weight:normal;white-space:nowrap;">in ground swimming pool</div>
<div class="abs" style="left:408.75px;top:804px;font-size:20.30px;line-height:40px;color:#006dca;font-weight:normal;white-space:nowrap;">stairs</div>
<svg class="abs" style="left:464.5px;top:816.5px" width="18" height="16" viewBox="0 0 18 16"><rect x="1.65" y="1.35" width="14.9" height="13.2" rx="1" fill="none" stroke="#a4a6b2" stroke-width="2.5"/><path d="M1.5 6.7 H16.8" stroke="#a4a6b2" stroke-width="2.1"/><path d="M11.9 1.2 V6.5" stroke="#a4a6b2" stroke-width="1.4"/></svg>
<div class="abs" style="left:661.0px;top:785.2px;width:22px;height:22px;border-radius:4px;background:#fff;color:#006dca;font-weight:bold;font-size:16px;line-height:22px;text-align:center">I</div>
<div class="abs" style="left:688.5px;top:785.2px;width:22px;height:22px;border-radius:4px;background:#fff;color:#00785a;font-weight:bold;font-size:16px;line-height:22px;text-align:center">T</div>
<div class="abs" style="left:428.00px;top:776px;width:400px;text-align:right;font-size:20.00px;line-height:40px;color:#191b23;font-weight:normal;white-space:nowrap;">720</div>
<div class="abs" style="left:541.00px;top:776px;width:400px;text-align:right;font-size:20.00px;line-height:40px;color:#191b23;font-weight:normal;white-space:nowrap;">1</div>
<div class="abs" style="left:621.60px;top:776px;width:400px;text-align:right;font-size:20.00px;line-height:40px;color:#191b23;font-weight:normal;white-space:nowrap;">56</div>
<div class="abs" style="left:1033.3px;top:788.6px;width:17px;height:17px;border-radius:9px;background:#ff8c3c"></div>
<div class="abs" style="left:715.00px;top:776px;width:400px;text-align:right;font-size:20.00px;line-height:40px;color:#191b23;font-weight:normal;white-space:nowrap;">15</div>
<div class="abs" style="left:1126.5px;top:788.6px;width:17px;height:17px;border-radius:9px;background:#5ad6a0"></div>
<div class="abs" style="left:842.50px;top:776px;width:400px;text-align:right;font-size:20.00px;line-height:40px;color:#191b23;font-weight:normal;white-space:nowrap;">0.82</div>
<div class="abs" style="left:919.50px;top:776px;width:400px;text-align:right;font-size:20.00px;line-height:40px;color:#191b23;font-weight:normal;white-space:nowrap;">1.00</div>
<svg class="abs" style="left:1342.0px;top:787.5px" width="22" height="19" viewBox="0 0 22 19"><path d="M0.3 1.5 Q0.3 0.2 1.5 0.2 H19.8 Q21 0.2 21 1.5 V6.8 L18.2 4 V3.6 H2.9 V15 H7.2 L9.9 17.9 H1.5 Q0.3 17.9 0.3 16.7 Z" fill="#a4a6b2"/><circle cx="14.6" cy="11.9" r="3.3" fill="none" stroke="#a4a6b2" stroke-width="2.5"/><path d="M17 14.3 L19.8 17" stroke="#a4a6b2" stroke-width="2.6" stroke-linecap="round"/></svg>
<div class="abs" style="left:1375px;top:783.2px;width:1.6px;height:27px;background:#c5c7ce"></div>
<div class="abs" style="left:1387.50px;top:776px;font-size:20.00px;line-height:40px;color:#6c6e79;font-weight:normal;white-space:nowrap;">8</div>
<svg class="abs" style="left:1387.5px;top:810.9px" width="12" height="2" viewBox="0 0 12 2"><path d="M0 1 H12" stroke="#8a8d98" stroke-width="1.3" stroke-dasharray="2.4 0.9"/></svg>
<div class="abs" style="left:1120.50px;top:776px;width:400px;text-align:right;font-size:20.00px;line-height:40px;color:#191b23;font-weight:normal;white-space:nowrap;">Last week</div>
<svg class="abs" style="left:1528.0px;top:786.2px" width="20" height="20" viewBox="0 0 20 20"><path d="M16 14.9 A8 8 0 1 1 15.56 4.14" fill="none" stroke="#006dca" stroke-width="2.6" stroke-linecap="round"/><path d="M17.9 1.2 V7.1 H12.1" fill="none" stroke="#006dca" stroke-width="2.6" stroke-linecap="round" stroke-linejoin="round"/></svg>
<div class="abs" style="left:337.0px;top:872.2px;width:22px;height:22px;border-radius:5px;background:#008ff8"><svg width="22" height="22" viewBox="0 0 22 22" style="display:block"><path d="M6 11.3 L9.4 14.6 L16 8" fill="none" stroke="#fff" stroke-width="2.6" stroke-linecap="round" stroke-linejoin="round"/></svg></div>
<svg class="abs" style="left:381.0px;top:872.2px" width="22" height="22" viewBox="0 0 22 22"><circle cx="10.6" cy="10.6" r="9.2" fill="none" stroke="#a4a6b2" stroke-width="2.5"/><path d="M10.6 6 V15.2 M6 10.6 H15.2" stroke="#a4a6b2" stroke-width="2.6" stroke-linecap="round"/></svg>
<div class="abs" style="left:408.75px;top:863px;font-size:20.30px;line-height:40px;color:#006dca;font-weight:normal;white-space:nowrap;">in ground swimming pool</div>
<div class="abs" style="left:408.75px;top:891px;font-size:20.30px;line-height:40px;color:#006dca;font-weight:normal;white-space:nowrap;">cost</div>
<svg class="abs" style="left:454.7px;top:903.5px" width="18" height="16" viewBox="0 0 18 16"><rect x="1.65" y="1.35" width="14.9" height="13.2" rx="1" fill="none" stroke="#a4a6b2" stroke-width="2.5"/><path d="M1.5 6.7 H16.8" stroke="#a4a6b2" stroke-width="2.1"/><path d="M11.9 1.2 V6.5" stroke="#a4a6b2" stroke-width="1.4"/></svg>
<div class="abs" style="left:661.0px;top:872.2px;width:22px;height:22px;border-radius:4px;background:#fff;color:#006dca;font-weight:bold;font-size:16px;line-height:22px;text-align:center">I</div>
<div class="abs" style="left:428.00px;top:863px;width:400px;text-align:right;font-size:20.00px;line-height:40px;color:#191b23;font-weight:normal;white-space:nowrap;">590</div>
<div class="abs" style="left:541.00px;top:863px;width:400px;text-align:right;font-size:20.00px;line-height:40px;color:#191b23;font-weight:normal;white-space:nowrap;">1</div>
<div class="abs" style="left:621.60px;top:863px;width:400px;text-align:right;font-size:20.00px;line-height:40px;color:#191b23;font-weight:normal;white-space:nowrap;">50</div>
<div class="abs" style="left:1033.3px;top:875.6px;width:17px;height:17px;border-radius:9px;background:#ff8c3c"></div>
<div class="abs" style="left:715.00px;top:863px;width:400px;text-align:right;font-size:20.00px;line-height:40px;color:#191b23;font-weight:normal;white-space:nowrap;">14</div>
<div class="abs" style="left:1126.5px;top:875.6px;width:17px;height:17px;border-radius:9px;background:#009f72"></div>
<div class="abs" style="left:842.50px;top:863px;width:400px;text-align:right;font-size:20.00px;line-height:40px;color:#191b23;font-weight:normal;white-space:nowrap;">1.82</div>
<div class="abs" style="left:919.50px;top:863px;width:400px;text-align:right;font-size:20.00px;line-height:40px;color:#191b23;font-weight:normal;white-space:nowrap;">0.47</div>
<svg class="abs" style="left:1342.0px;top:874.5px" width="22" height="19" viewBox="0 0 22 19"><path d="M0.3 1.5 Q0.3 0.2 1.5 0.2 H19.8 Q21 0.2 21 1.5 V6.8 L18.2 4 V3.6 H2.9 V15 H7.2 L9.9 17.9 H1.5 Q0.3 17.9 0.3 16.7 Z" fill="#a4a6b2"/><circle cx="14.6" cy="11.9" r="3.3" fill="none" stroke="#a4a6b2" stroke-width="2.5"/><path d="M17 14.3 L19.8 17" stroke="#a4a6b2" stroke-width="2.6" stroke-linecap="round"/></svg>
<div class="abs" style="left:1375px;top:870.2px;width:1.6px;height:27px;background:#c5c7ce"></div>
<div class="abs" style="left:1387.50px;top:863px;font-size:20.00px;line-height:40px;color:#6c6e79;font-weight:normal;white-space:nowrap;">5</div>
<svg class="abs" style="left:1387.5px;top:897.9px" width="12" height="2" viewBox="0 0 12 2"><path d="M0 1 H12" stroke="#8a8d98" stroke-width="1.3" stroke-dasharray="2.4 0.9"/></svg>
<div class="abs" style="left:1120.50px;top:863px;width:400px;text-align:right;font-size:20.00px;line-height:40px;color:#191b23;font-weight:normal;white-space:nowrap;">Last week</div>
<svg class="abs" style="left:1528.0px;top:873.2px" width="20" height="20" viewBox="0 0 20 20"><path d="M16 14.9 A8 8 0 1 1 15.56 4.14" fill="none" stroke="#006dca" stroke-width="2.6" stroke-linecap="round"/><path d="M17.9 1.2 V7.1 H12.1" fill="none" stroke="#006dca" stroke-width="2.6" stroke-linecap="round" stroke-linejoin="round"/></svg>
<div class="abs" style="left:706px;top:360.25px;width:518px;height:274.5px;background:#fff;border-radius:8px;box-shadow:0 2px 14px rgba(25,27,35,0.16),0 0 1px rgba(25,27,35,0.25)"></div>
<div class="abs" style="left:717.75px;top:372px;font-size:19.30px;line-height:40px;color:#191b23;font-weight:bold;white-space:nowrap;">All <span style="color:#006dca">Keyword Strategy Builder</span> lists</div>
<div class="abs" style="left:1172.60px;top:370px;font-size:19.60px;line-height:40px;color:#6c6e79;font-weight:normal;white-space:nowrap;">Help</div>
<div class="abs" style="left:1172.6px;top:401.5px;width:40px;height:0;border-top:1.3px dashed #9a9ca8"></div>
<div class="abs" style="left:706px;top:409.5px;width:518px;height:1.3px;background:#c9ccd4"></div>
<div class="abs" style="left:717.75px;top:418px;font-size:20.30px;line-height:40px;color:#191b23;font-weight:normal;white-space:nowrap;">swimming pool</div>
<div class="abs" style="left:784.50px;top:417px;width:400px;text-align:right;font-size:20.50px;line-height:40px;color:#006dca;font-weight:normal;white-space:nowrap;">5/2,000</div>
<svg class="abs" style="left:1192.0px;top:425.0px" width="22" height="22" viewBox="0 0 22 22"><path d="M6.9 7.3 H2.35 V19.4 H14.45 V14.7" fill="none" stroke="#006dca" stroke-width="2.8" stroke-linecap="round" stroke-linejoin="round"/><path d="M7.5 14.1 L18.7 3.2 M12.8 3.2 H18.7 V9.1" fill="none" stroke="#006dca" stroke-width="2.8" stroke-linecap="round" stroke-linejoin="round"/></svg>
<div class="abs" style="left:717px;top:456.5px;width:80px;height:29px;border-radius:15px;background:#e6f3ff;border:1px solid #a9d5ff"></div>
<div class="abs" style="left:729.00px;top:450px;font-size:17.50px;line-height:40px;color:#006dca;font-weight:normal;white-space:nowrap;">Default</div>
<div class="abs" style="left:717.75px;top:494px;font-size:19.40px;line-height:40px;color:#191b23;font-weight:normal;white-space:nowrap;">seo</div>
<div class="abs" style="left:784.50px;top:493px;width:400px;text-align:right;font-size:20.50px;line-height:40px;color:#006dca;font-weight:normal;white-space:nowrap;">0/2,000</div>
<svg class="abs" style="left:1192.0px;top:501.0px" width="22" height="22" viewBox="0 0 22 22"><path d="M6.9 7.3 H2.35 V19.4 H14.45 V14.7" fill="none" stroke="#006dca" stroke-width="2.8" stroke-linecap="round" stroke-linejoin="round"/><path d="M7.5 14.1 L18.7 3.2 M12.8 3.2 H18.7 V9.1" fill="none" stroke="#006dca" stroke-width="2.8" stroke-linecap="round" stroke-linejoin="round"/></svg>
<div class="abs" style="left:717px;top:533.5px;width:132px;height:27.5px;border-radius:14px;background:#fff;border:1px solid #d5d7de"></div>
<div class="abs" style="left:729.00px;top:526px;font-size:17.40px;line-height:40px;color:#6c6e79;font-weight:normal;white-space:nowrap;">Set as default</div>
<div class="abs" style="left:706px;top:574.7px;width:518px;height:1px;background:#e0e1e7"></div>
<div class="abs" style="left:717.75px;top:583px;font-size:20.30px;line-height:40px;color:#006dca;font-weight:normal;white-space:nowrap;">Create new empty list</div>
<svg class="abs" style="left:1195px;top:596px" width="15" height="15" viewBox="0 0 15 15"><path d="M7.5 1 V14 M1 7.5 H14" stroke="#006dca" stroke-width="2.2"/></svg>
<svg class="abs" style="left:0;top:0" width="1600" height="948" viewBox="0 0 1600 948">
<rect x="712.2" y="580.2" width="210.3" height="45.5" rx="14" ry="14" fill="none" stroke="#ff2412" stroke-width="3.9"/>
<circle cx="1025" cy="548" r="24.5" fill="none" stroke="#ff2412" stroke-width="3.4"/>
<circle cx="1253.5" cy="303.3" r="24.7" fill="none" stroke="#ff2412" stroke-width="3.4"/>
<path d="M1036 571.5 C1020 587 990 600 953 603.5" fill="none" stroke="#ff2412" stroke-width="3.8" stroke-linecap="round"/>
<path d="M934.8 603.5 L953.3 594.5 L953.3 613 Z" fill="#ff2412"/>
</svg>
<div class="abs" style="left:975px;top:536.2px;width:100px;text-align:center;font-size:25px;line-height:1;font-weight:bold;color:#ff2412">12</div>
<div class="abs" style="left:1203.5px;top:291.5px;width:100px;text-align:center;font-size:25px;line-height:1;font-weight:bold;color:#ff2412">13</div>
</body></html>
